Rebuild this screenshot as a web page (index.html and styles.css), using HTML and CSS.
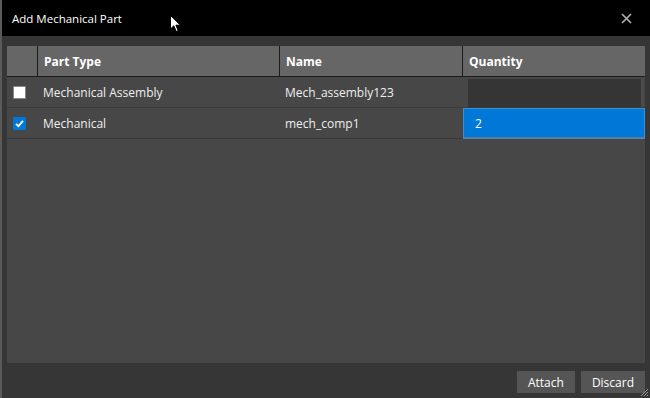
FILE: index.html
```html
<!DOCTYPE html>
<html lang="en">
<head>
    <meta charset="UTF-8">
    <title>Add Mechanical Part</title>
    <link rel="stylesheet" href="styles.css">
</head>
<body>
    <div class="dialog">
        <!-- Title bar -->
        <div class="titlebar">
            <span class="title">Add Mechanical Part</span>
            <span class="close">
                <svg width="11" height="11" viewBox="0 0 11 11"><path d="M1 1 L10 10 M10 1 L1 10" stroke="#b0aca8" stroke-width="1.7"/></svg>
            </span>
        </div>

        <div class="content">
            <div class="grid">
                <div class="row head">
                    <div class="cell check"></div>
                    <div class="cell">Part Type</div>
                    <div class="cell">Name</div>
                    <div class="cell last">Quantity</div>
                </div>
                <div class="row">
                    <div class="cell check"><span class="box"></span></div>
                    <div class="cell">Mechanical Assembly</div>
                    <div class="cell">Mech_assembly123</div>
                    <div class="cell qty"><span class="qty-empty"></span></div>
                </div>
                <div class="row">
                    <div class="cell check"><span class="box checked">
                        <svg width="13" height="13" viewBox="0 0 13 13"><path d="M3 6.8 L5.4 9.2 L10 3.8" fill="none" stroke="#fff" stroke-width="1.8"/></svg>
                    </span></div>
                    <div class="cell">Mechanical</div>
                    <div class="cell">mech_comp1</div>
                    <div class="cell qty"><span class="qty-edit">2</span></div>
                </div>
            </div>

            <div class="footer">
                <button class="btn">Attach</button>
                <button class="btn">Discard</button>
            </div>
        </div>

        <!-- mouse pointer -->
        <svg class="cursor" width="12" height="18" viewBox="0 0 12 18"><path d="M0.5 0.5 L0.5 14 L3.8 10.8 L6.2 16.5 L8.2 15.6 L5.9 10.2 L10.5 10.2 Z" fill="#fff" stroke="#000" stroke-width="1"/></svg>
        <svg class="grip" width="10" height="10" viewBox="0 0 10 10"><path d="M9 2 L2 9 M9 5 L5 9 M9 8 L8 9" stroke="#9a9a9a" stroke-width="1"/></svg>
    </div>
</body>
</html>
```

FILE: styles.css
```css
/* Base */
body {
    margin: 0;
    padding: 0;
    font-family: 'Open Sans', 'Noto Sans', Arial, sans-serif;
    font-size: 12px;
    color: #eeeeee;
    background-color: #363636;
}

.dialog {
    position: relative;
    width: 650px;
    height: 398px;
    display: flex;
    flex-direction: column;
    background-color: #363636;
    border-left: 2px solid #5a5a5a;
    box-sizing: border-box;
    overflow: hidden;
}

/* Title bar */
.titlebar {
    height: 36px;
    flex: none;
    background-color: #000;
    display: flex;
    align-items: center;
    justify-content: space-between;
    margin-left: -2px;
    padding: 0 18px 0 12px;
    font-size: 11.5px;
}

.title {
    color: #ffffff;
}

.close {
    display: flex;
    align-items: center;
}

/* Content */
.content {
    flex: 1;
    display: flex;
    flex-direction: column;
    padding: 10px 5px 5px 5px;
}

.grid {
    flex: 1;
    background-color: #474747;
}

.row {
    display: grid;
    grid-template-columns: 31px 242px 183px 182px;
    height: 31px;
    border-bottom: 1px solid #3a3a3a;
    box-sizing: border-box;
}

.cell {
    display: flex;
    align-items: center;
    padding-left: 5px;
    white-space: nowrap;
}

.row.head {
    height: 31px;
    background-color: #666666;
    border-bottom: 1px solid #1c1c1c;
    font-weight: bold;
    color: #ffffff;
}

.row.head .cell {
    padding-left: 6px;
    border-right: 1px solid #1c1c1c;
}

.row.head .cell.last {
    border-right: none;
}

.cell.check {
    padding-left: 6px;
}

.box {
    width: 13px;
    height: 13px;
    box-sizing: border-box;
    background-color: #ffffff;
    border: 1px solid #8a8a8a;
    border-radius: 1px;
}

.box.checked {
    background-color: #0078d7;
    border-color: #0078d7;
    display: flex;
}

.box.checked svg {
    margin: -1px;
}

/* Quantity editors */
.cell.qty {
    padding: 0;
    position: relative;
}

.qty-empty {
    position: absolute;
    left: 5px;
    right: 2px;
    top: 2px;
    bottom: 0;
    background-color: #353535;
    border-right: 2px solid #4c4c4c;
}

.qty-edit {
    position: absolute;
    left: 0;
    right: 0;
    top: 0;
    height: 31px;
    box-sizing: border-box;
    padding-left: 11px;
    display: flex;
    align-items: center;
    background-color: #0078d7;
    border: 1px solid #3f8fd0;
    border-bottom: 2px solid #5a7fa3;
    color: #ffffff;
}

/* Footer buttons */
.footer {
    display: flex;
    justify-content: flex-end;
    gap: 6px;
    padding-top: 8px;
}

.btn {
    height: 22px;
    padding: 0 11px;
    border: none;
    background-color: #555555;
    color: #ffffff;
    font-family: inherit;
    font-size: 12px;
}

.cursor {
    position: absolute;
    left: 168px;
    top: 15px;
}

.grip {
    position: absolute;
    right: 1px;
    bottom: 1px;
}
```
